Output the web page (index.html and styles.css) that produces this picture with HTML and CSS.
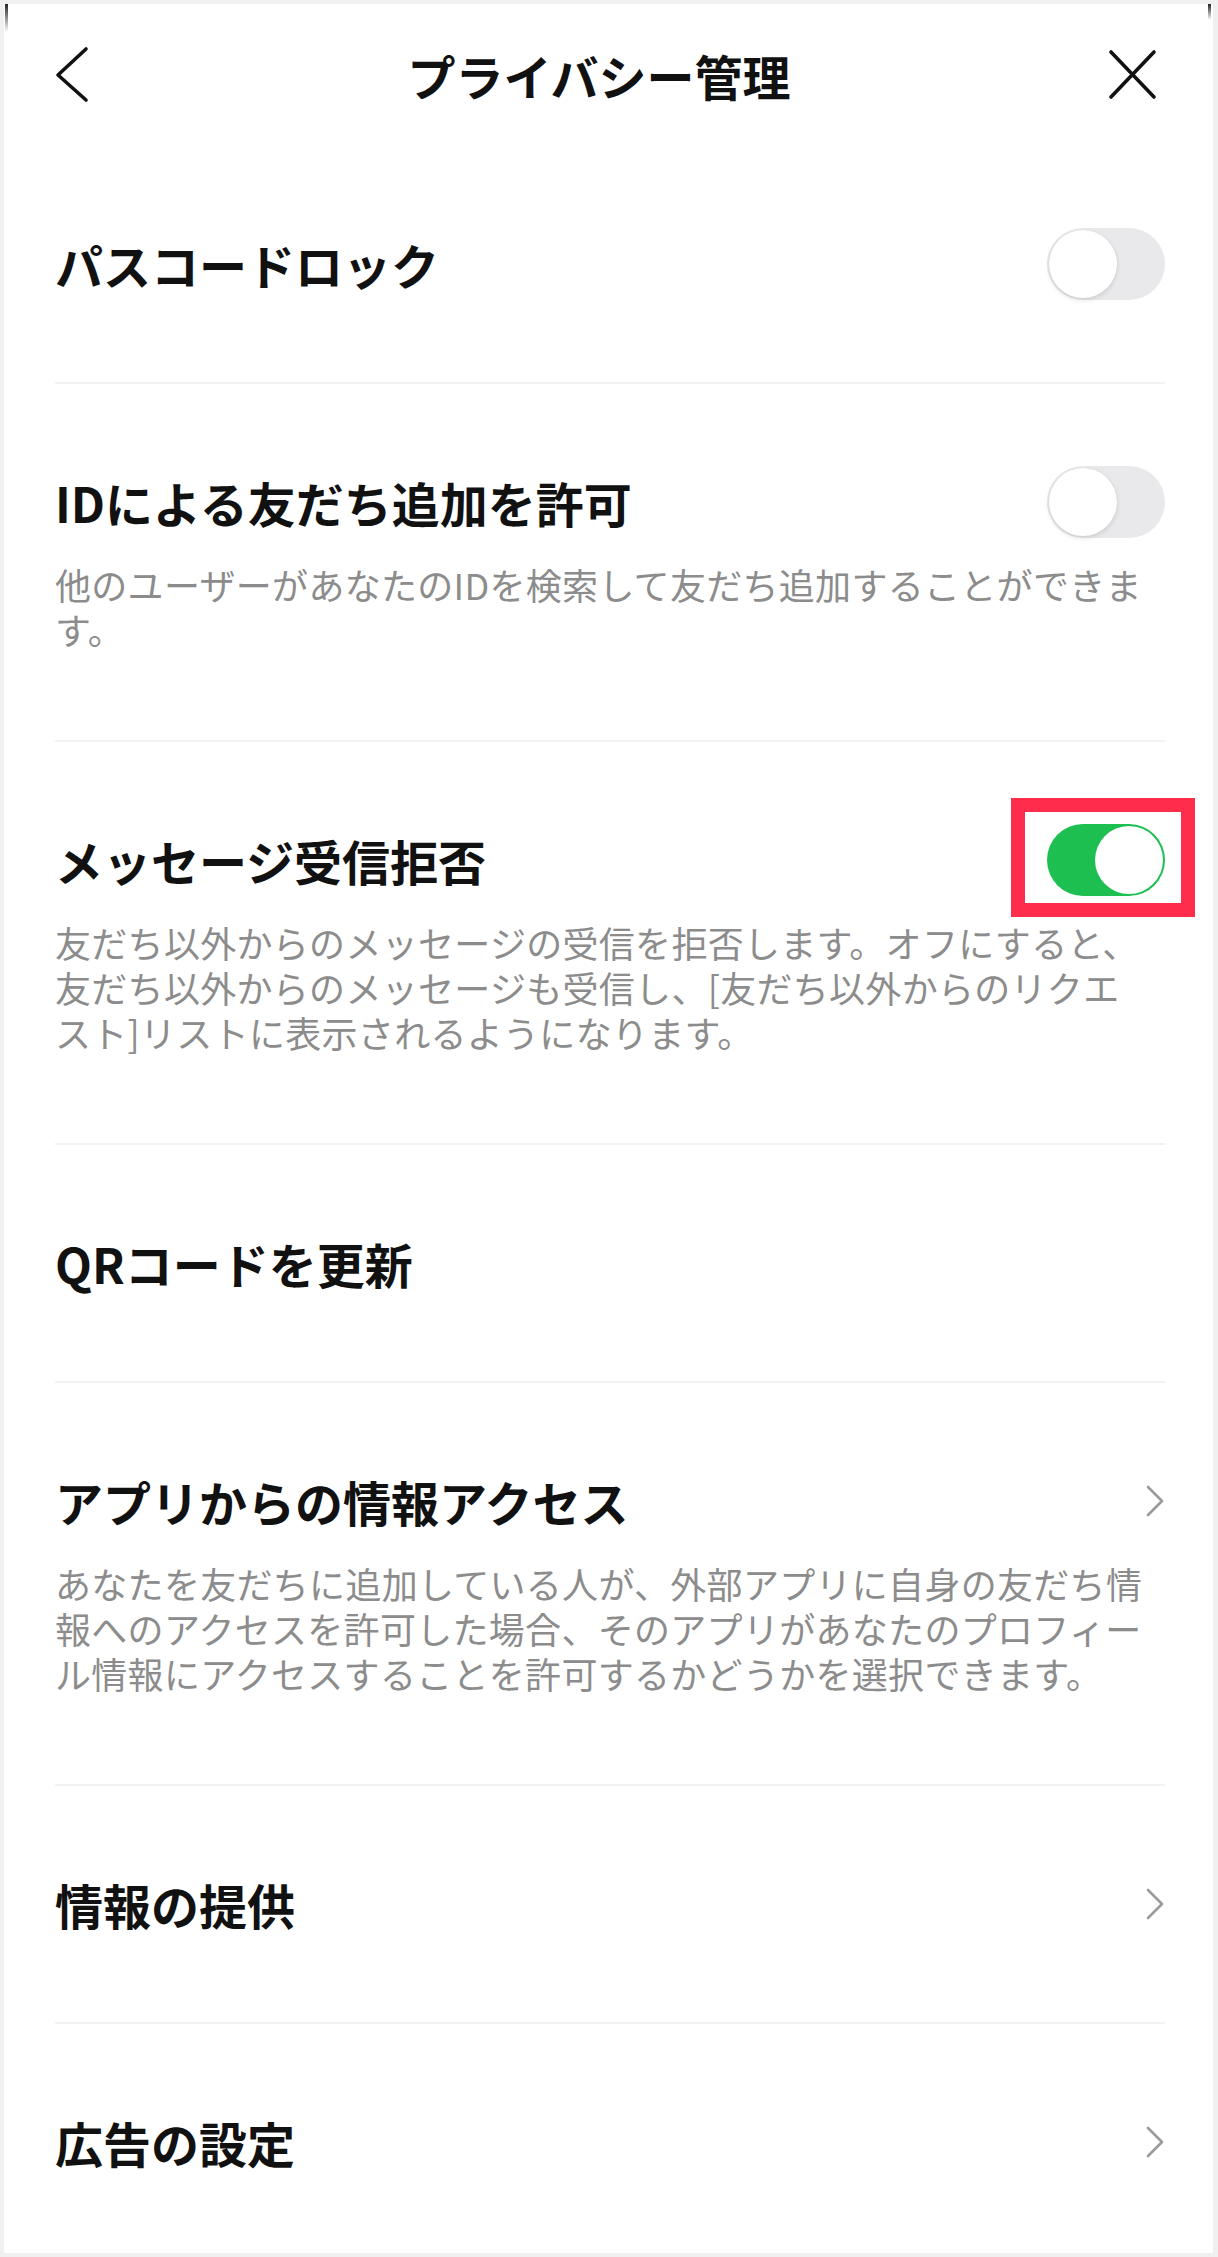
FILE: index.html
```html
<!DOCTYPE html>
<html lang="ja">
<head>
<meta charset="utf-8">
<title>プライバシー管理</title>
<link rel="stylesheet" href="styles.css">
</head>
<body>
<div class="frame">
  <span class="mark mark-left"></span>
  <span class="mark mark-right"></span>
  <header class="header">
    <svg class="icon-back" width="44" height="60" viewBox="0 0 44 60">
      <path d="M36 4 L8 30 L36 55" fill="none" stroke="#111" stroke-width="3.6" stroke-linecap="round" stroke-linejoin="round"/>
    </svg>
    <h1 class="title">プライバシー管理</h1>
    <svg class="icon-close" width="60" height="60" viewBox="0 0 60 60">
      <path d="M7 7 L50 52 M50 7 L7 52" fill="none" stroke="#111" stroke-width="3.6" stroke-linecap="round"/>
    </svg>
  </header>

  <main class="list">
    <section class="row">
      <div class="row-head">
        <span class="row-title">パスコードロック</span>
        <span class="toggle"><span class="knob"></span></span>
      </div>
    </section>

    <section class="row">
      <div class="row-head">
        <span class="row-title">IDによる友だち追加を許可</span>
        <span class="toggle"><span class="knob"></span></span>
      </div>
      <p class="desc">他のユーザーがあなたのIDを検索して友だち追加することができま<br>す。</p>
    </section>

    <section class="row">
      <div class="row-head">
        <span class="row-title">メッセージ受信拒否</span>
        <span class="toggle toggle-on highlighted"><span class="knob"></span></span>
      </div>
      <p class="desc">友だち以外からのメッセージの受信を拒否します。オフにすると、<br>友だち以外からのメッセージも受信し、[友だち以外からのリクエ<br>スト]リストに表示されるようになります。</p>
    </section>

    <section class="row">
      <div class="row-head">
        <span class="row-title">QRコードを更新</span>
      </div>
    </section>

    <section class="row">
      <div class="row-head">
        <span class="row-title">アプリからの情報アクセス</span>
        <svg class="chev" width="20" height="34" viewBox="0 0 20 34"><path d="M3 3 L17 17 L3 31" fill="none" stroke="#9a9a9a" stroke-width="2.6" stroke-linecap="round" stroke-linejoin="round"/></svg>
      </div>
      <p class="desc">あなたを友だちに追加している人が、外部アプリに自身の友だち情<br>報へのアクセスを許可した場合、そのアプリがあなたのプロフィー<br>ル情報にアクセスすることを許可するかどうかを選択できます。</p>
    </section>

    <section class="row">
      <div class="row-head">
        <span class="row-title">情報の提供</span>
        <svg class="chev" width="20" height="34" viewBox="0 0 20 34"><path d="M3 3 L17 17 L3 31" fill="none" stroke="#9a9a9a" stroke-width="2.6" stroke-linecap="round" stroke-linejoin="round"/></svg>
      </div>
    </section>

    <section class="row">
      <div class="row-head">
        <span class="row-title">広告の設定</span>
        <svg class="chev" width="20" height="34" viewBox="0 0 20 34"><path d="M3 3 L17 17 L3 31" fill="none" stroke="#9a9a9a" stroke-width="2.6" stroke-linecap="round" stroke-linejoin="round"/></svg>
      </div>
    </section>
  </main>
</div>
</body>
</html>
```

FILE: styles.css
```css
* { box-sizing: border-box; }

html, body {
  margin: 0;
  padding: 0;
  background: #ffffff;
}

body {
  font-family: "Noto Sans CJK JP", "Noto Sans", sans-serif;
  color: #111111;
}

.frame {
  position: relative;
  width: 1218px;
  height: 2257px;
  overflow: hidden;
  border: 4px solid #f0f0f0;
  border-right-width: 5px;
  background: #ffffff;
}

.mark {
  position: absolute;
  top: 0;
  width: 3px;
  background: linear-gradient(#222, rgba(34,34,34,0));
}
.mark-left { left: 1px; height: 28px; }
.mark-right { right: 2px; height: 16px; }

.header {
  height: 142px;
  display: flex;
  align-items: center;
  justify-content: space-between;
  padding: 0 49px 0 46px;
}

.icon-back, .icon-close { display: block; flex: none; }

.title {
  margin: 0;
  font-size: 48px;
  font-weight: 700;
  line-height: 60px;
  color: #111;
  letter-spacing: 0;
}

.list {
  padding: 0 48px 0 51px;
}

.row {
  padding: 88px 0;
  border-top: 2px solid #f2f2f2;
}
.row:first-child { border-top: none; }

.row-head {
  height: 60px;
  display: flex;
  align-items: center;
  justify-content: space-between;
}

.row-title {
  font-size: 48px;
  font-weight: 700;
  line-height: 60px;
  color: #111;
  white-space: nowrap;
}

.desc {
  margin: 30px 0 0;
  font-size: 36px;
  line-height: 45px;
  color: #8c8c8c;
  letter-spacing: 0.3px;
  white-space: nowrap;
}

.toggle {
  position: relative;
  flex: none;
  width: 118px;
  height: 72px;
  margin: -6px 0;
  border-radius: 36px;
  background: #e9e9eb;
}

.toggle .knob {
  position: absolute;
  top: 2px;
  left: 2px;
  width: 68px;
  height: 68px;
  border-radius: 50%;
  background: #ffffff;
  box-shadow: 0 2px 5px rgba(0,0,0,0.12), 0 0 1px rgba(0,0,0,0.08);
}

.toggle-on { background: #1dbf50; }
.toggle-on .knob { left: auto; right: 2px; box-shadow: none; }

.highlighted::after {
  content: "";
  position: absolute;
  top: -26px;
  bottom: -21px;
  left: -36px;
  right: -30px;
  border: 14px solid #ff2d4b;
}

.chev {
  display: block;
  flex: none;
  margin-right: 0;
}
```
